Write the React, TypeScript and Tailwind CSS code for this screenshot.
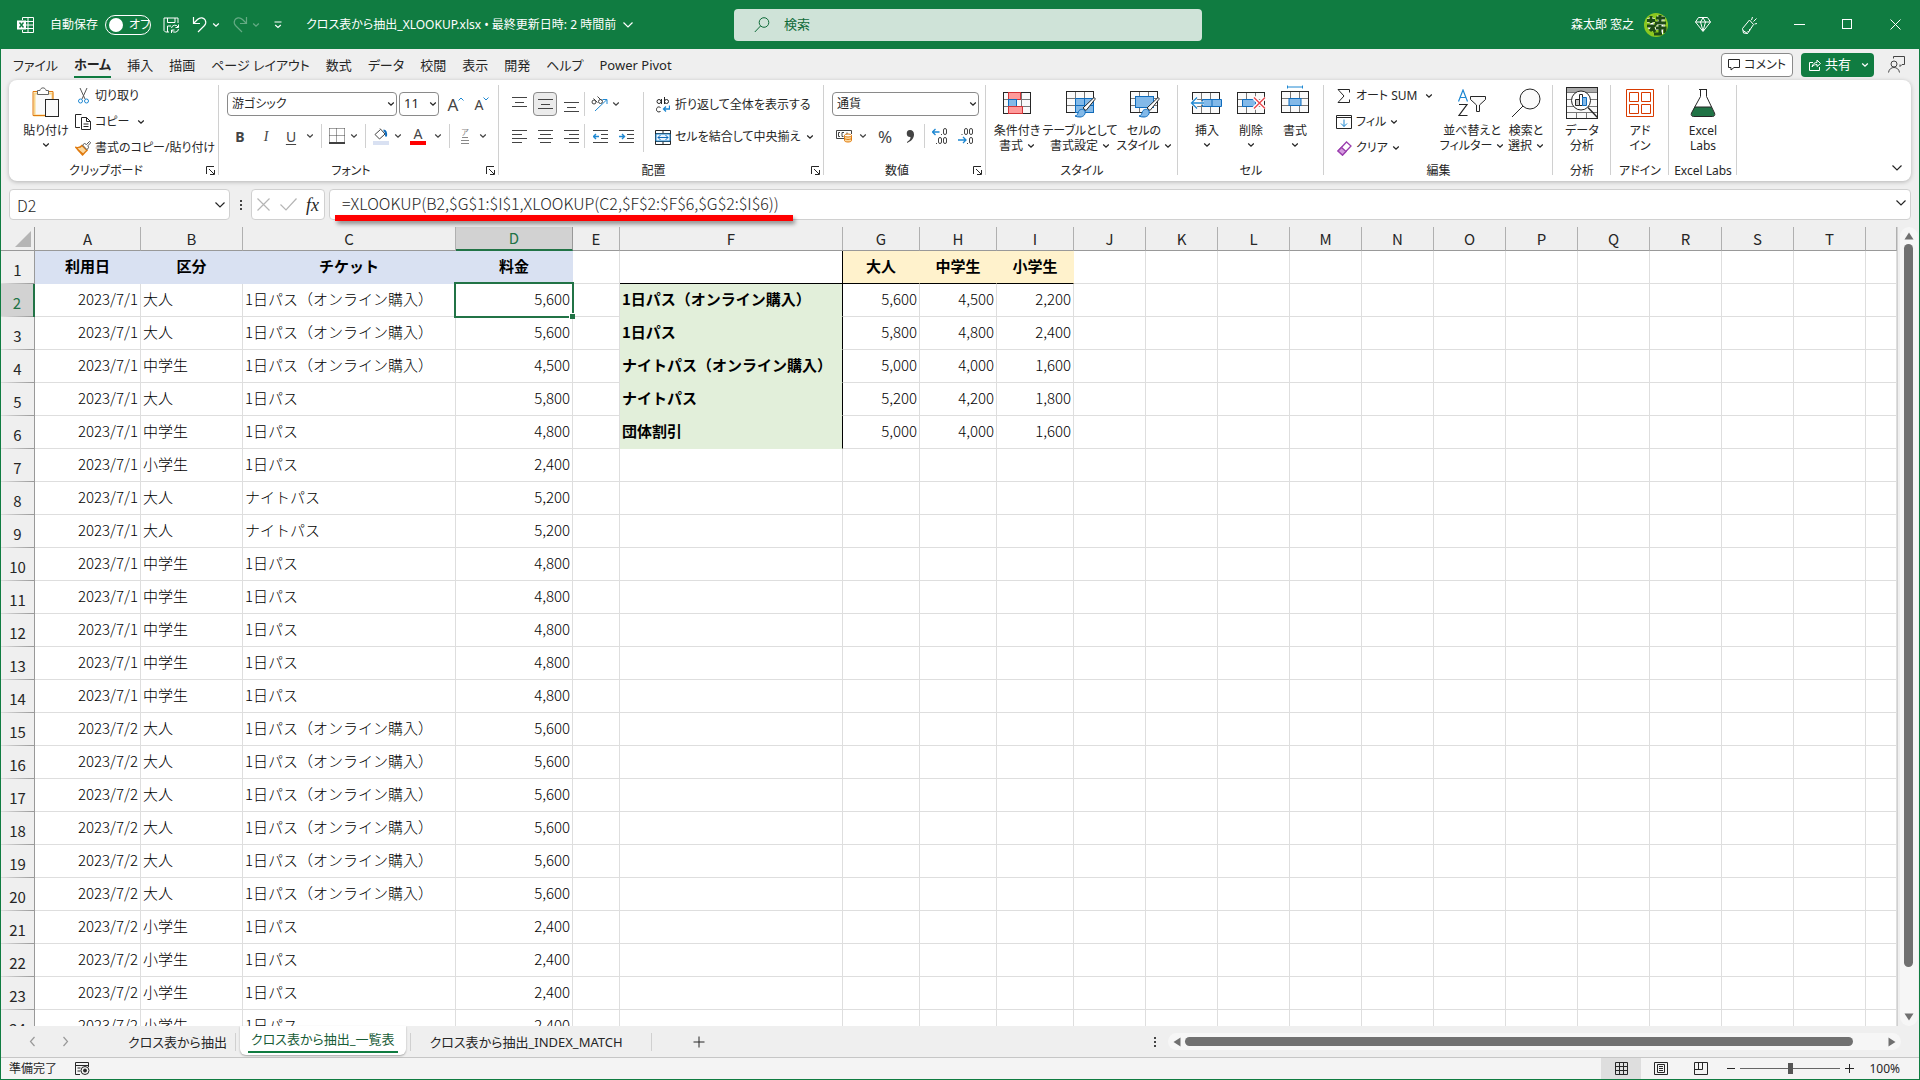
import { useState, type ReactNode } from 'react';

type SheetRow = [date: string, kind: string, ticket: string, price: string];

const ONLINE = '1日パス（オンライン購入）';

const sheetRows: SheetRow[] = [
  ['2023/7/1', '大人', ONLINE, '5,600'],
  ['2023/7/1', '大人', ONLINE, '5,600'],
  ['2023/7/1', '中学生', ONLINE, '4,500'],
  ['2023/7/1', '大人', '1日パス', '5,800'],
  ['2023/7/1', '中学生', '1日パス', '4,800'],
  ['2023/7/1', '小学生', '1日パス', '2,400'],
  ['2023/7/1', '大人', 'ナイトパス', '5,200'],
  ['2023/7/1', '大人', 'ナイトパス', '5,200'],
  ['2023/7/1', '中学生', '1日パス', '4,800'],
  ['2023/7/1', '中学生', '1日パス', '4,800'],
  ['2023/7/1', '中学生', '1日パス', '4,800'],
  ['2023/7/1', '中学生', '1日パス', '4,800'],
  ['2023/7/1', '中学生', '1日パス', '4,800'],
  ['2023/7/2', '大人', ONLINE, '5,600'],
  ['2023/7/2', '大人', ONLINE, '5,600'],
  ['2023/7/2', '大人', ONLINE, '5,600'],
  ['2023/7/2', '大人', ONLINE, '5,600'],
  ['2023/7/2', '大人', ONLINE, '5,600'],
  ['2023/7/2', '大人', ONLINE, '5,600'],
  ['2023/7/2', '小学生', '1日パス', '2,400'],
  ['2023/7/2', '小学生', '1日パス', '2,400'],
  ['2023/7/2', '小学生', '1日パス', '2,400'],
  ['2023/7/2', '小学生', '1日パス', '2,400'],
];

const priceTable = [
  [ONLINE, '5,600', '4,500', '2,200'],
  ['1日パス', '5,800', '4,800', '2,400'],
  ['ナイトパス（オンライン購入）', '5,000', '4,000', '1,600'],
  ['ナイトパス', '5,200', '4,200', '1,800'],
  ['団体割引', '5,000', '4,000', '1,600'],
];

const columns = [
  { name: 'A', width: 'w-[106px]' },
  { name: 'B', width: 'w-[102px]' },
  { name: 'C', width: 'w-[213px]' },
  { name: 'D', width: 'w-[117px]' },
  { name: 'E', width: 'w-[47px]' },
  { name: 'F', width: 'w-[223px]' },
  { name: 'G', width: 'w-[77px]' },
  { name: 'H', width: 'w-[77px]' },
  { name: 'I', width: 'w-[77px]' },
  ...'JKLMNOPQRST'.split('').map((name) => ({ name, width: 'w-[72px]' })),
  { name: '', width: '' },
];

const menuTabs = ['ファイル', 'ホーム', '挿入', '描画', 'ページ レイアウト', '数式', 'データ', '校閲', '表示', '開発', 'ヘルプ', 'Power Pivot'];

/* ---------- small shared pieces ---------- */

interface SvgProps {
  w: number;
  h: number;
  children: ReactNode;
  className?: string;
}

function Svg({ w, h, children, className = '' }: SvgProps) {
  return (
    <svg
      width={w}
      height={h}
      viewBox={`0 0 ${w} ${h}`}
      fill="none"
      stroke="currentColor"
      aria-hidden="true"
      className={`shrink-0 ${className}`}
    >
      {children}
    </svg>
  );
}

function Chevron({ className = '' }: { className?: string }) {
  return (
    <Svg w={8} h={6} className={className}>
      <path d="M1.2 1.5 4 4.2 6.8 1.5" strokeWidth="1.3" />
    </Svg>
  );
}

function BigChevron({ className = '' }: { className?: string }) {
  return (
    <Svg w={12} h={8} className={className}>
      <path d="M1.5 1.5 6 6 10.5 1.5" strokeWidth="1.2" />
    </Svg>
  );
}

function IconButton({ label, width = 'w-[26px]', children }: { label: string; width?: string; children: ReactNode }) {
  return (
    <button type="button" aria-label={label} className={`flex h-6 shrink-0 items-center justify-center ${width}`}>
      {children}
    </button>
  );
}

function MenuArrow({ label }: { label: string }) {
  return (
    <button type="button" aria-label={label} className="flex h-6 w-[14px] shrink-0 items-center justify-center">
      <Chevron />
    </button>
  );
}

function Divider({ className = 'h-6' }: { className?: string }) {
  return <div className={`w-px shrink-0 bg-[#d0d0d0] ${className}`} />;
}

interface GroupProps {
  label: string;
  width: string;
  launcher?: boolean;
  children: ReactNode;
}

function Group({ label, width, launcher, children }: GroupProps) {
  return (
    <section className={`relative flex shrink-0 flex-col ${width}`}>
      <div className="flex h-[81px] pt-[3px]">{children}</div>
      <div className={`flex h-5 items-center justify-center whitespace-nowrap text-[12px] ${launcher ? 'pr-4' : ''}`}>{label}</div>
      {launcher && (
        <button type="button" aria-label={`${label}の設定`} className="absolute right-1 bottom-1.5">
          <Svg w={9} h={9}>
            <path d="M.5 8V.5H8M3 3l5 5M8.5 4v4.5H4" />
          </Svg>
        </button>
      )}
      <div className="absolute top-[5px] right-0 h-[90px] w-px bg-[#d0d0d0]" />
    </section>
  );
}

interface BigButtonProps {
  icon: ReactNode;
  lines: string[];
  width: string;
  menu?: 'inline' | 'below';
}

function BigButton({ icon, lines, width, menu }: BigButtonProps) {
  return (
    <button type="button" className={`flex shrink-0 flex-col items-center text-[12px] leading-[15px] ${width}`}>
      <span className="flex h-10 items-center justify-center">{icon}</span>
      {lines.map((line, i) => (
        <span key={line} className="flex items-center gap-1 whitespace-nowrap">
          {line}
          {menu === 'inline' && i === lines.length - 1 && <Chevron />}
        </span>
      ))}
      {menu === 'below' && <Chevron className="mt-1" />}
    </button>
  );
}

interface RowButtonProps {
  icon: ReactNode;
  label: string;
  menu?: string;
}

function RowButton({ icon, label, menu }: RowButtonProps) {
  return (
    <button type="button" className="flex h-[26px] items-center whitespace-nowrap text-[12px]">
      <span className="mr-1 flex w-4 justify-center">{icon}</span>
      {label}
      {menu && <Chevron className={menu} />}
    </button>
  );
}

/* ---------- title bar ---------- */

function TitleBar() {
  const [autoSave, setAutoSave] = useState(false);

  return (
    <header className="flex h-[49px] shrink-0 items-center bg-[#107c41] text-[12px] text-white">
      <div className="flex min-w-0 flex-1 items-center whitespace-nowrap pl-4">
        <Svg w={17} h={16}>
          <path d="M5.5 3V.5h11v15h-11V13M5.500 4.500h11M5.500 8h11M5.500 11.500h11M11 .5v15" />
          <rect x="0" y="3.500" width="9" height="9" fill="#fff" stroke="none" />
          <path d="m2.500 5.500 4 5m0-5-4 5" stroke="#107c41" strokeWidth="1.400" />
        </Svg>
        <label className="ml-4 flex items-center gap-[7px]">
          自動保存
          <input
            type="checkbox"
            checked={autoSave}
            onChange={(e) => setAutoSave(e.target.checked)}
            className="peer sr-only"
          />
          <span className="flex h-5 w-[46px] items-center gap-1.5 rounded-full border border-white pl-[3px]">
            <span className="h-[14px] w-[14px] shrink-0 rounded-full bg-white" />
            {autoSave ? 'オン' : 'オフ'}
          </span>
        </label>
        <button type="button" aria-label="上書き保存" className="ml-3">
          <Svg w={17} h={16}>
            <path d="M6 15H2.500L1 13.500V1h14v5M4.500 1v4.500H12V1M4.500 15V9H8" />
            <path d="M8.500 11a3.500 3.500 0 0 1 6.500-1m.5-2.500V10.500h-3M15.500 12a3.500 3.500 0 0 1-6.500 1.500M8.500 16v-3h3" />
          </Svg>
        </button>
        <button type="button" aria-label="元に戻す" className="ml-3">
          <Svg w={16} h={17}>
            <path d="M1.500 1v6.500H8M1.500 7.500 5.500 3.500c3-3 6.500-1.500 7.700.5 1 2 .6 4-.7 5.500L6 16" strokeWidth="1.200" />
          </Svg>
        </button>
        <Chevron className="ml-1" />
        <button type="button" aria-label="やり直し" className="ml-3 opacity-35">
          <Svg w={16} h={17}>
            <path d="M14.500 1v6.500H8M14.500 7.500 10.500 3.500c-3-3-6.500-1.500-7.700.5-1 2-.6 4 .7 5.500L10 16" strokeWidth="1.200" />
          </Svg>
        </button>
        <Chevron className="ml-1 opacity-35" />
        <button type="button" aria-label="クイック アクセス ツール バー" className="ml-[14px]">
          <Svg w={8} h={8}>
            <path d="M.5 1h7M1.200 4 4 6.500 6.800 4" strokeWidth="1.200" />
          </Svg>
        </button>
        <button type="button" className="ml-6 flex items-center gap-1.5">
          クロス表から抽出_XLOOKUP.xlsx&nbsp;•&nbsp;最終更新日時: 2 時間前
          <BigChevron />
        </button>
      </div>

      <label className="ml-3 flex h-8 w-[468px] items-center gap-[14px] rounded bg-[#cfe3d8] pl-5 text-[#0f6b39]">
        <Svg w={16} h={16}>
          <circle cx="10" cy="5.500" r="4.800" />
          <path d="M6.500 9 .8 15" />
        </Svg>
        <input
          type="search"
          aria-label="検索"
          placeholder="検索"
          className="min-w-0 flex-1 bg-transparent text-[13px] outline-none placeholder:text-[#0f6b39]"
        />
      </label>

      <div className="flex flex-1 items-center justify-end whitespace-nowrap pr-3">
        森太郎 窓之
        <span className="ml-[10px] flex h-6 w-6 items-center justify-center overflow-hidden rounded-full bg-[#8cc820]">
          <Svg w={24} h={24}>
            <g stroke="#fff" strokeWidth="4">
              <path d="M3 7.500h8M7 4v6M5 16l3-4 3 6M13 4.500l8 1M16 3v8M12 10.500h9M12 15h9M17 12v9" />
            </g>
            <g stroke="#1d4a16" strokeWidth="3">
              <path d="M3 7.500h8M7 3v7M3 13h7l-4 5M8 13l3 6M12 5h9M16 2v9M11 10h11M12 15h9v5M16 12v9M10 21h8" />
            </g>
          </Svg>
        </span>
        <button type="button" aria-label="プレミアム" className="ml-[27px]">
          <Svg w={16} h={15}>
            <path d="M3.500 .5h9l3 4.500L8 14.500.5 5zM.5 5h15M5.500 5 8 14l2.500-9L8 .8z" />
          </Svg>
        </button>
        <button type="button" aria-label="新機能" className="ml-[30px]">
          <Svg w={17} h={18}>
            <path d="M8.500 4 1.500 12.500l1 4.500 4 .5L12.500 8.500zM2 14.500l4.500 3M6.500 15.500c1.500.5 3-1 2-2.500M10.500 4l1-3M12.500 5.500 15.500 2.500M13.500 8l2.500-.5" />
          </Svg>
        </button>
        <button type="button" aria-label="最小化" className="flex w-[47px] justify-end">
          <Svg w={11} h={11}>
            <path d="M0 5.500h11" />
          </Svg>
        </button>
        <button type="button" aria-label="最大化" className="flex w-12 justify-end">
          <Svg w={11} h={11}>
            <rect x=".5" y=".5" width="9" height="9" />
          </Svg>
        </button>
        <button type="button" aria-label="閉じる" className="flex w-[54px] justify-end pr-1.5">
          <Svg w={11} h={11}>
            <path d="m.5.5 10 10m0-10-10 10" />
          </Svg>
        </button>
      </div>
    </header>
  );
}

function MenuBar() {
  return (
    <nav className="flex h-[31px] shrink-0 items-center justify-between">
      <div className="flex items-center pl-1 text-[13px]">
        {menuTabs.map((tab) => (
          <button key={tab} type="button" className="px-2 leading-[26px] whitespace-nowrap">
            <span className={tab === 'ホーム' ? 'block border-b-2 border-[#107c41] font-bold leading-[24px]' : ''}>{tab}</span>
          </button>
        ))}
      </div>
      <div className="flex items-center pr-[14px]">
        <button type="button" className="mr-2 flex h-6 items-center gap-1 rounded border border-[#8a8a8a] bg-white px-1.5 text-[12px]">
          <Svg w={12} h={12}>
            <path d="M.5.5h11v8H6L3 11V8.500H.5z" />
          </Svg>
          コメント
        </button>
        <button type="button" className="mr-[14px] flex h-6 w-[73px] items-center gap-1 rounded bg-[#107c41] pl-2 text-[13px] text-white">
          <Svg w={12} h={13}>
            <path d="M4 4.500H.5v8h10V9M3 9c.5-3 2.500-4.500 5-4.500V2l3.500 3.500L8 8.500V6.500C6 6.500 4.500 7 3 9z" />
          </Svg>
          共有
          <Chevron className="ml-1.5" />
        </button>
        <button type="button" aria-label="フィードバック">
          <Svg w={17} h={17} className="text-[#444]">
            <path d="M5.500.5h11v8h-2.500l-2 2v-2M5.500.5v2" />
            <circle cx="6" cy="8" r="3" />
            <path d="M.5 16.500c.5-3.500 3-5 5.500-5s5 1.500 5.500 5" />
          </Svg>
        </button>
      </div>
    </nav>
  );
}

/* ---------- ribbon ---------- */

function Lines({ d }: { d: string }) {
  return (
    <Svg w={15} h={15}>
      <path d={d} />
    </Svg>
  );
}

function GridBase() {
  return (
    <>
      <rect x="2.500" y="3.500" width="27" height="21" fill="#fafafa" />
      <path d="M2.500 10.500h27M2.500 17.500h27M11.500 3.500v21M20.500 3.500v21" stroke="#777" />
      <rect x="2.500" y="3.500" width="27" height="21" />
    </>
  );
}

function Brush() {
  return (
    <>
      <path d="M19 20 29.500 10c1-.6 2 .3 1.500 1.300L22 22.500z" fill="#fff" />
      <path d="M11 28c2.500-.5 2.500-2 3.500-4.500 1-2.500 5-3 6.500-.5 1 3-1.500 6-5 6-2 0-3.800-.2-5-1z" fill="#83b9e8" stroke="#0f6cbd" />
    </>
  );
}

function Ribbon() {
  return (
    <div className="relative mx-2 flex h-[101px] shrink-0 overflow-hidden rounded-lg bg-white text-[#262626] shadow-[0_1px_4px_rgba(0,0,0,0.25)]">
      <Group label="クリップボード" width="w-[210px]" launcher>
        <div className="flex pl-3">
          <BigButton
            width="w-[50px]"
            lines={['貼り付け']}
            menu="below"
            icon={
              <Svg w={28} h={32}>
                <path d="M2.500 6.500h18v22h-18z" fill="#fafafa" stroke="#f8d58a" strokeWidth="2" />
                <path d="M1 4.500h20v24H1z" stroke="#e07b10" />
                <path d="M5.500 7.500v-4H8c.5-3.500 5.500-3.500 6 0h2.500v4z" fill="#fff" stroke="#666" />
                <rect x="13.500" y="12.500" width="13" height="17" fill="#fafafa" />
              </Svg>
            }
          />
          <div className="ml-1 flex flex-col items-start">
            <RowButton
              label="切り取り"
              icon={
                <Svg w={11} h={16}>
                  <path d="M2 0l5 11M9 0 4 11" stroke="#555" />
                  <circle cx="2.500" cy="13" r="2" stroke="#1e88d2" />
                  <circle cx="8.500" cy="13" r="2" stroke="#1e88d2" />
                </Svg>
              }
            />
            <RowButton
              label="コピー"
              menu="ml-2"
              icon={
                <Svg w={16} h={16}>
                  <path d="M5 13.500H.5V.5h6M6.500 3.500h5l4 4v8h-9zM11.500 3.500v4h4M8.500 10h5M8.500 12.500h5" />
                </Svg>
              }
            />
            <RowButton
              label="書式のコピー/貼り付け"
              icon={
                <Svg w={16} h={15}>
                  <path d="M1 6.500c3 .5 5-.5 6-2l5 5c-2 1.500-3 3-4.500 4.500z" fill="#fbd9a0" stroke="#e07b10" strokeWidth="1.400" />
                  <path d="m3 9 5 4" stroke="#e07b10" strokeWidth="1.500" />
                  <path d="m7.500 4 2-1.500 2 1 3-3 1.200 1.200-2.700 3 .5 2-1.500 2z" fill="#fff" stroke="#555" />
                </Svg>
              }
            />
          </div>
        </div>
      </Group>

      <Group label="フォント" width="w-[280px]" launcher>
        <div className="flex flex-col gap-2 pt-[9px] pl-2">
          <div className="flex items-center">
            <div className="relative mr-0.5 w-[170px]">
              <select aria-label="フォント名" className="block h-6 w-full appearance-none rounded border border-[#8a8a8a] bg-white pl-1 text-[12px]">
                <option>游ゴシック</option>
              </select>
              <Chevron className="pointer-events-none absolute top-[9px] right-0.5" />
            </div>
            <div className="relative mr-1 w-10">
              <select aria-label="フォント サイズ" className="block h-6 w-full appearance-none rounded border border-[#8a8a8a] bg-white pl-1 text-[13px]">
                <option>11</option>
              </select>
              <Chevron className="pointer-events-none absolute top-[9px] right-0.5" />
            </div>
            <IconButton label="フォント サイズの拡大">
              <span className="text-[17px] leading-none text-[#444]">A</span>
              <Svg w={6} h={4} className="mb-[10px] text-[#1e88d2]">
                <path d="M.5 3.500 3 1l2.500 2.500" />
              </Svg>
            </IconButton>
            <IconButton label="フォント サイズの縮小">
              <span className="mt-0.5 text-[14px] leading-none text-[#444]">A</span>
              <Svg w={6} h={4} className="mb-[10px] text-[#1e88d2]">
                <path d="M.5.500 3 3 5.500.5" />
              </Svg>
            </IconButton>
          </div>
          <div className="flex items-center text-[14px] text-[#444]">
            <IconButton label="太字">
              <b>B</b>
            </IconButton>
            <IconButton label="斜体">
              <i className="font-['Liberation_Serif',serif]">I</i>
            </IconButton>
            <IconButton label="下線" width="w-6">
              <u className="underline-offset-2">U</u>
            </IconButton>
            <MenuArrow label="下線の種類" />
            <Divider className="mx-1 h-6" />
            <IconButton label="罫線" width="w-[21px]">
              <Svg w={16} h={16}>
                <path d="M.5.500h15M.5 7.500h15M.5.500v14M15.500.500v14M7.500.500v14" strokeDasharray="1 1" />
                <path d="M0 15h16" stroke="#000" strokeWidth="1.500" />
              </Svg>
            </IconButton>
            <MenuArrow label="罫線の種類" />
            <Divider className="mx-1 h-6" />
            <IconButton label="塗りつぶしの色" width="w-[21px]">
              <Svg w={16} h={18}>
                <path d="M7 1.500 12 7l-5.500 5L2 7.500 7.500 2.500" />
                <path d="M10.500 3.500c2 0 3 2 2.500 6" stroke="#0f6cbd" strokeWidth="2" />
                <rect x="0" y="14" width="16" height="4" fill="#d9e1f2" stroke="none" />
              </Svg>
            </IconButton>
            <MenuArrow label="塗りつぶしの色の一覧" />
            <IconButton label="フォントの色">
              <span className="flex flex-col items-center">
                <span className="leading-[14px]">A</span>
                <span className="h-1 w-4 bg-[#f00]" />
              </span>
            </IconButton>
            <MenuArrow label="フォントの色の一覧" />
            <Divider className="mx-1 h-6" />
            <IconButton label="ふりがな" width="w-[22px]">
              <span className="flex flex-col items-center text-[#888]">
                <span className="text-[8px] leading-[8px]">ア</span>
                <Svg w={8} h={8}>
                  <path d="M1 1.500h6M0 4.500h8M0 7.500h8" />
                </Svg>
              </span>
            </IconButton>
            <MenuArrow label="ふりがなの設定" />
          </div>
        </div>
      </Group>

      <Group label="配置" width="w-[325px]" launcher>
        <div className="flex pt-[9px] pl-[7px]">
          <div className="flex flex-col gap-2 text-[#444]">
            <div className="flex items-center">
              <IconButton label="上揃え">
                <Lines d="M0 .5h15M3 5.500h9M0 9.500h15" />
              </IconButton>
              <button
                type="button"
                aria-label="上下中央揃え"
                className="mx-px flex h-6 w-6 items-center justify-center rounded border border-[#8a8a8a] bg-[#ebebeb]"
              >
                <Lines d="M0 2.500h15M3 7.500h9M0 11.500h15" />
              </button>
              <IconButton label="下揃え">
                <Lines d="M0 5.500h15M3 10.500h9M0 14.500h15" />
              </IconButton>
              <Divider className="mr-1 h-6" />
              <IconButton label="方向" width="w-5">
                <Svg w={17} h={16}>
                  <circle cx="3" cy="6" r="2" />
                  <path d="m2.500 2.500 4 4M6.500.500l4 4" />
                  <circle cx="9.500" cy="5.500" r="2" />
                  <path d="M4 15 16 3.500M11.500 3.500H16V8" stroke="#1e88d2" />
                </Svg>
              </IconButton>
              <MenuArrow label="方向の種類" />
            </div>
            <div className="flex items-center">
              <IconButton label="左揃え">
                <Lines d="M0 1.500h15M0 5.500h10M0 9.500h15M0 13.500h10" />
              </IconButton>
              <IconButton label="中央揃え">
                <Lines d="M0 1.500h15M2 5.500h11M0 9.500h15M2 13.500h11" />
              </IconButton>
              <IconButton label="右揃え">
                <Lines d="M0 1.500h15M5 5.500h10M0 9.500h15M5 13.500h10" />
              </IconButton>
              <Divider className="mr-0.5 h-6" />
              <IconButton label="インデントを減らす">
                <Svg w={15} h={15}>
                  <path d="M0 1.500h15M8 5.500h7M8 9.500h7M0 13.500h15" />
                  <path d="M.5 7.500H6M3 5 .5 7.500 3 10" stroke="#1e88d2" strokeWidth="1.400" />
                </Svg>
              </IconButton>
              <IconButton label="インデントを増やす">
                <Svg w={15} h={15}>
                  <path d="M0 1.500h15M8 5.500h7M8 9.500h7M0 13.500h15" />
                  <path d="M0 7.500h5.500M3 5l2.500 2.500L3 10" stroke="#1e88d2" strokeWidth="1.400" />
                </Svg>
              </IconButton>
            </div>
          </div>
          <Divider className="mr-[11px] ml-1 h-[60px]" />
          <div className="flex flex-col items-start gap-[6px]">
            <RowButton
              label="折り返して全体を表示する"
              icon={
                <Svg w={14} h={16}>
                  <circle cx="3" cy="4.500" r="2" />
                  <path d="M5.500 2v5M8.500 0v7M4.500 10.500c-2.500-1.500-4 .2-4 2s1.500 3.200 4 2" />
                  <circle cx="10.500" cy="4.500" r="2" />
                  <path d="M13.500 8.500v3.500H7.500M10 9.500 7.500 12l2.500 2.500" stroke="#1e88d2" strokeWidth="1.300" />
                </Svg>
              }
            />
            <RowButton
              label="セルを結合して中央揃え"
              menu="ml-1.5"
              icon={
                <Svg w={16} h={15}>
                  <path d="M.5.500h15v14H.5zM.5 3.500h15M.5 11.500h15M8 .5v3M8 11.500v3" />
                  <path d="M1 4h14v7H1z" fill="#eaf4fc" stroke="#1e88d2" />
                  <path d="M3 7.500h10M5.500 5 3 7.500 5.500 10M10.500 5 13 7.500 10.500 10" stroke="#0f6cbd" />
                </Svg>
              }
            />
          </div>
        </div>
      </Group>

      <Group label="数値" width="w-[162px]" launcher>
        <div className="flex flex-1 flex-col gap-2 pt-[9px] pr-2 pl-2">
          <div className="relative">
            <select aria-label="表示形式" className="block h-6 w-full appearance-none rounded border border-[#8a8a8a] bg-white pl-1 text-[12px]">
              <option>通貨</option>
            </select>
            <Chevron className="pointer-events-none absolute top-[9px] right-0.5" />
          </div>
          <div className="flex items-center text-[#444]">
            <IconButton label="通貨表示形式" width="w-6">
              <Svg w={17} h={14}>
                <path d="M8 9.500H.5v-8h15V5M4 3.500H2.500v4H4M8 3.500H6v4h1.500M11 3.500v2" />
                <path d="M8.500 6.500v5c0 2 7 2 7 0v-5" fill="#fbd9a0" stroke="#e07b10" />
                <ellipse cx="12" cy="6.500" rx="3.500" ry="1.500" fill="#fff" stroke="#e07b10" />
                <path d="M8.500 9c0 2 7 2 7 0" stroke="#e07b10" />
              </Svg>
            </IconButton>
            <MenuArrow label="通貨の種類" />
            <IconButton label="パーセント スタイル" width="w-[30px]">
              <span className="text-[17px] leading-none">%</span>
            </IconButton>
            <IconButton label="桁区切りスタイル" width="w-5">
              <Svg w={8} h={13}>
                <path d="M4 0a3.500 3.500 0 1 0 .5 7C4.500 9 3.500 10.500 1 12v1c4-1.500 7-4.500 7-8.500C8 1.500 6.500 0 4 0z" fill="currentColor" stroke="none" />
              </Svg>
            </IconButton>
            <Divider className="mr-0.5 ml-1 h-6" />
            <IconButton label="小数点以下の表示桁数を増やす">
              <Svg w={16} h={16}>
                <path d="M.5 4h7M3.500 1 .5 4l3 3" stroke="#1e88d2" strokeWidth="1.300" />
                <rect x="11.500" y=".5" width="3" height="6" rx="1.500" />
                <rect x="6.500" y="9.500" width="3" height="6" rx="1.500" />
                <rect x="11.500" y="9.500" width="3" height="6" rx="1.500" />
                <path d="M9 6.500h1M4 15.500h1" />
              </Svg>
            </IconButton>
            <IconButton label="小数点以下の表示桁数を減らす">
              <Svg w={16} h={16}>
                <path d="M0 12h8M5 9l3 3-3 3" stroke="#1e88d2" strokeWidth="1.300" />
                <rect x="6.500" y=".5" width="3" height="6" rx="1.500" />
                <rect x="11.500" y=".5" width="3" height="6" rx="1.500" />
                <rect x="11.500" y="9.500" width="3" height="6" rx="1.500" />
                <path d="M3.500 6.500h1M9 15.500h1" />
              </Svg>
            </IconButton>
          </div>
        </div>
      </Group>

      <Group label="スタイル" width="w-[192px]">
        <div className="flex pl-0.5">
          <BigButton
            width="w-[58px]"
            lines={['条件付き', '書式']}
            menu="inline"
            icon={
              <Svg w={32} h={28}>
                <GridBase />
                <rect x="7.500" y="3.500" width="12" height="7" fill="#ff9a9a" stroke="#d13438" />
                <rect x="7.500" y="10.500" width="8" height="7" fill="#83b9e8" stroke="#0f6cbd" />
                <rect x="7.500" y="17.500" width="14" height="7" fill="#ff9a9a" stroke="#d13438" />
              </Svg>
            }
          />
          <BigButton
            width="w-[68px]"
            lines={['テーブルとして', '書式設定']}
            menu="inline"
            icon={
              <Svg w={32} h={30}>
                <GridBase />
                <path d="M11.500 10.500h18v14h-18z" fill="#83b9e8" stroke="#0f6cbd" />
                <path d="M20.500 10.500v14M11.500 17.500h18" stroke="#0f6cbd" />
                <Brush />
              </Svg>
            }
          />
          <BigButton
            width="w-[60px]"
            lines={['セルの', 'スタイル']}
            menu="inline"
            icon={
              <Svg w={32} h={30}>
                <GridBase />
                <rect x="7.500" y="8.500" width="18" height="11" fill="#83b9e8" stroke="#0f6cbd" />
                <Brush />
              </Svg>
            }
          />
        </div>
      </Group>

      <Group label="セル" width="w-[146px]">
        <div className="flex pl-[7px]">
          <BigButton
            width="w-11"
            lines={['挿入']}
            menu="below"
            icon={
              <Svg w={34} h={28}>
                <GridBase />
                <path d="M12.500 10.500h19v7h-19zM22 10.500v7" fill="#83b9e8" stroke="#0f6cbd" />
                <path d="M14 14H1.500M7 8.500 1.500 14 7 19.500" stroke="#fff" strokeWidth="3" />
                <path d="M14 14H1.500M7 8.500 1.500 14 7 19.500" stroke="#1e88d2" strokeWidth="1.300" />
              </Svg>
            }
          />
          <BigButton
            width="w-11"
            lines={['削除']}
            menu="below"
            icon={
              <Svg w={32} h={28}>
                <GridBase />
                <path d="M7.500 10.500h13v7h-13z" fill="#83b9e8" stroke="#0f6cbd" />
                <path d="m19 8.500 11 11m0-11-11 11" stroke="#fff" strokeWidth="4" />
                <path d="m19 8.500 11 11m0-11-11 11" stroke="#e8484d" strokeWidth="1.400" />
              </Svg>
            }
          />
          <BigButton
            width="w-11"
            lines={['書式']}
            menu="below"
            icon={
              <Svg w={32} h={32} className="mb-1">
                <path d="M8.500.500v3M23.500.500v3M8.500 2h15" stroke="#1e88d2" />
                <g transform="translate(0 3)">
                  <GridBase />
                  <rect x="10" y="10.500" width="12" height="7" fill="#83b9e8" stroke="#0f6cbd" />
                </g>
              </Svg>
            }
          />
        </div>
      </Group>

      <Group label="編集" width="w-[229px]">
        <div className="flex flex-1 pl-3">
          <div className="flex w-[108px] flex-col items-start">
            <RowButton
              label="オート SUM"
              menu="ml-2"
              icon={
                <Svg w={14} h={15}>
                  <path d="M12.500 3.500V.5H1l6 6.500L1 13.500h11.500v-3" />
                </Svg>
              }
            />
            <RowButton
              label="フィル"
              menu="ml-1"
              icon={
                <Svg w={16} h={14}>
                  <path d="M.5.500h15v13H.5zM.5 2.500h15" />
                  <path d="M8 4.500v7M5 8.500l3 3 3-3" stroke="#1e88d2" />
                </Svg>
              }
            />
            <RowButton
              label="クリア"
              menu="ml-1"
              icon={
                <Svg w={15} h={15} className="text-[#9b3fae]">
                  <path d="M1 10 9.500 1 14 5l-8.500 9z" fill="#fff" strokeWidth="1.300" />
                  <path d="M1 10 4.500 6.500 9 10.500 5.500 14z" fill="#d59be0" strokeWidth="1.300" />
                </Svg>
              }
            />
          </div>
          <BigButton
            width="w-[56px]"
            lines={['並べ替えと', 'フィルター']}
            menu="inline"
            icon={
              <Svg w={30} h={28}>
                <path d="M1.500 12.500 6 1l4.500 11.500M3 8.500h6" stroke="#1e88d2" strokeWidth="1.200" />
                <path d="M2 15.500h8L2 26.500h8.500" strokeWidth="1.200" />
                <path d="M13.500 7.500h15v3L22.500 16v6.500h-3V16l-6-5.500z" fill="#fafafa" />
              </Svg>
            }
          />
          <BigButton
            width="w-[52px]"
            lines={['検索と', '選択']}
            menu="inline"
            icon={
              <Svg w={30} h={30}>
                <circle cx="19" cy="11" r="10" fill="#fafafa" />
                <path d="M12 18 1 29" />
              </Svg>
            }
          />
        </div>
      </Group>

      <Group label="分析" width="w-[58px]">
        <BigButton
          width="w-full"
          lines={['データ', '分析']}
          icon={
            <Svg w={32} h={32}>
              <rect x=".5" y=".5" width="31" height="31" fill="#fafafa" />
              <path d="M1 1h30v4H1z" fill="#aaa" stroke="none" />
              <path d="M.5 5.500h31M.5 12.500h31M.5 19.500h31M.5 25.500h31M10.500 25v6M20.500 25v6" stroke="#777" />
              <rect x=".5" y=".5" width="31" height="31" />
              <circle cx="15" cy="13.500" r="9.500" fill="#fff" />
              <path d="m22 20.500 9.500 10" strokeWidth="1.400" />
              <path d="M9.500 12.500h4v6h-4z" fill="#ccc" />
              <path d="M13.500 7.500h3v11h-3z" fill="#fff" />
              <path d="M16.500 10.500h4v8h-4z" fill="#83b9e8" stroke="#0f6cbd" />
            </Svg>
          }
        />
      </Group>

      <Group label="アドイン" width="w-[58px]">
        <BigButton
          width="w-full"
          lines={['アド', 'イン']}
          icon={
            <Svg w={28} h={28} className="text-[#d83b01]">
              <path d="M.5.500h27v27H.5zM3.500 3.500h9v9h-9zM15.500 3.500h9v9h-9zM3.500 15.500h9v9h-9zM15.500 15.500h9v9h-9z" />
            </Svg>
          }
        />
      </Group>

      <Group label="Excel Labs" width="w-[68px]">
        <BigButton
          width="w-full"
          lines={['Excel', 'Labs']}
          icon={
            <Svg w={26} h={28}>
              <path d="M4.500 18h17l3 6.500c.5 1.500-.3 3-2 3h-19c-1.700 0-2.500-1.500-2-3z" fill="#217346" stroke="none" />
              <path d="M9 .5h8M10.500.500v7L1.500 24c-.8 2 0 3.500 2 3.500h19c2 0 2.800-1.500 2-3.500L16.500 7.500v-7M4.500 18h17" />
            </Svg>
          }
        />
      </Group>

      <button type="button" aria-label="リボンを折りたたむ" className="ml-auto self-end pr-2 pb-[9px]">
        <BigChevron />
      </button>
    </div>
  );
}

/* ---------- formula bar ---------- */

function FormulaBar() {
  const [formula, setFormula] = useState('=XLOOKUP(B2,$G$1:$I$1,XLOOKUP(C2,$F$2:$F$6,$G$2:$I$6))');

  return (
    <div className="mx-2 mt-2 flex h-[31px] shrink-0 items-center text-[16px] text-[#262626]">
      <div className="relative h-full w-[221px] shrink-0">
        <input
          aria-label="名前ボックス"
          defaultValue="D2"
          className="h-full w-full rounded border border-[#d0d0d0] bg-white pl-[7px] outline-none"
        />
        <BigChevron className="absolute top-3 right-1" />
      </div>
      <span className="flex w-[21px] flex-col items-center gap-0.5">
        <span className="h-0.5 w-0.5 bg-[#444]" />
        <span className="h-0.5 w-0.5 bg-[#444]" />
        <span className="h-0.5 w-0.5 bg-[#444]" />
      </span>
      <div className="mr-1 flex h-full w-[74px] shrink-0 items-center justify-between rounded border border-[#d0d0d0] bg-white px-[5px]">
        <button type="button" aria-label="キャンセル">
          <Svg w={13} h={13} className="text-[#b5b5b5]">
            <path d="m.5.500 12 12m0-12-12 12" strokeWidth="1.200" />
          </Svg>
        </button>
        <button type="button" aria-label="入力">
          <Svg w={17} h={13} className="text-[#b5b5b5]">
            <path d="m.5 6.500 5.500 5.500L16.500.500" strokeWidth="1.200" />
          </Svg>
        </button>
        <button type="button" aria-label="関数の挿入" className="font-['Liberation_Serif',serif] text-[18px] leading-none italic">
          fx
        </button>
      </div>
      <div className="relative h-full min-w-0 flex-1">
        <input
          aria-label="数式バー"
          value={formula}
          onChange={(e) => setFormula(e.target.value)}
          className="h-full w-full rounded border border-[#d0d0d0] bg-white pr-7 pb-1 pl-3 outline-none"
        />
        <div className="pointer-events-none absolute top-[26px] left-1.5 h-1.5 w-[458px] bg-[#f00] shadow-[2px_3px_4px_rgba(0,0,0,0.4)]" />
        <BigChevron className="absolute top-2.5 right-1" />
      </div>
    </div>
  );
}

/* ---------- sheet ---------- */

interface Cell {
  text: string;
  style: string;
}

const PLAIN = 'border-[#dedede]';
const BLUE = 'border-[#d9e1f2] bg-[#d9e1f2] text-center font-bold';
const YELLOW = 'border-r-[#fff2cc] border-b-black bg-[#fff2cc] text-center font-bold';
const GREEN = 'border-r-black border-b-[#e2efda] bg-[#e2efda] font-bold';

// row and col are zero based, col 0 is A
function getCell(row: number, col: number): Cell {
  if (row === 0) {
    if (col < 4) return { text: ['利用日', '区分', 'チケット', '料金'][col], style: BLUE };
    if (col === 5) return { text: '', style: 'border-black' };
    if (col > 5 && col < 9) return { text: ['大人', '中学生', '小学生'][col - 6], style: YELLOW };
    return { text: '', style: PLAIN };
  }
  if (col < 4) {
    const align = col === 0 || col === 3 ? 'text-right' : 'text-left';
    return { text: sheetRows[row - 1][col], style: `${PLAIN} ${align}` };
  }
  if (row <= priceTable.length && col > 4 && col < 9) {
    const text = priceTable[row - 1][col - 5];
    return { text, style: col === 5 ? GREEN : `${PLAIN} text-right` };
  }
  return { text: '', style: PLAIN };
}

function Sheet() {
  const [active] = useState({ row: 1, col: 3 });

  return (
    <div className="min-w-0 flex-1 overflow-hidden border-r border-[#d0d0d0]">
      <table className="w-full table-fixed border-separate border-spacing-0 bg-white text-[15px] leading-5 text-black">
        <colgroup>
          <col className="w-[34px]" />
          {columns.map((c, i) => (
            <col key={i} className={c.width} />
          ))}
        </colgroup>
        <thead>
          <tr className="h-6 bg-[#efefef]">
            <th className="border-r border-b border-[#999] p-0" aria-label="すべて選択">
              <Svg w={18} h={18} className="ml-auto mr-0.5">
                <path d="M17 1v16H1z" fill="#b5b5b5" stroke="none" />
              </Svg>
            </th>
            {columns.map((c, i) => (
              <th
                key={i}
                scope="col"
                className={`border-r p-0 leading-[22px] font-normal ${
                  i === active.col
                    ? 'border-b-2 border-r-[#999] border-b-[#217346] bg-[#d2d2d2] text-[#217346]'
                    : 'border-b border-r-[#b0b0b0] border-b-[#999] text-[#262626]'
                }`}
              >
                {c.name}
              </th>
            ))}
          </tr>
        </thead>
        <tbody>
          {Array.from({ length: sheetRows.length + 1 }, (_, row) => (
            <tr key={row} className="h-[33px]">
              <th
                scope="row"
                className={`bg-[linear-gradient(to_right,#dddddd,#999999)] bg-[length:100%_1px] bg-bottom bg-no-repeat p-0 pt-1 font-normal ${
                  row === active.row
                    ? 'border-r-2 border-[#217346] bg-[#d2d2d2] text-[#217346]'
                    : 'border-r border-[#999] bg-[#efefef] text-[#262626]'
                }`}
              >
                {row + 1}
              </th>
              {columns.map((_, col) => {
                const cell = getCell(row, col);
                const isActive = row === active.row && col === active.col;
                return (
                  <td key={col} className={`border-r border-b px-0.5 pt-0 pb-0.5 whitespace-nowrap ${cell.style} ${isActive ? 'relative' : ''}`}>
                    {cell.text}
                    {isActive && (
                      <>
                        <span className="absolute -top-0.5 -right-0.5 -bottom-0.5 -left-0.5 border-2 border-[#217346]" />
                        <span className="absolute -right-[3px] -bottom-[3px] h-1.5 w-1.5 border-t border-l border-white bg-[#217346]" />
                      </>
                    )}
                  </td>
                );
              })}
            </tr>
          ))}
        </tbody>
      </table>
    </div>
  );
}

function VerticalScroll() {
  return (
    <div className="flex w-[21px] shrink-0 justify-center">
      <div className="flex w-[18px] flex-col items-center rounded-full bg-[#f6f6f6] py-[5px] text-[#707070]">
        <Svg w={10} h={8}>
          <path d="M5 .5 9.500 7.500H.5z" fill="currentColor" stroke="none" />
        </Svg>
        <div className="mt-1 flex min-h-0 w-[9px] flex-1 flex-col">
          <div className="h-[94%] rounded-full bg-[#707070]" />
        </div>
        <Svg w={10} h={8}>
          <path d="M5 7.500 9.500.500H.5z" fill="currentColor" stroke="none" />
        </Svg>
      </div>
    </div>
  );
}

function SheetTabs() {
  return (
    <div className="flex h-8 shrink-0 items-start border-b border-[#c6c6c6] text-[13px] text-[#262626]">
      <div className="flex h-[31px] items-center gap-[26px] pl-7 text-[#999]">
        <button type="button" aria-label="前のシート">
          <Svg w={7} h={11}>
            <path d="M5.500 1 1.500 5.500l4 4.500" strokeWidth="1.200" />
          </Svg>
        </button>
        <button type="button" aria-label="次のシート">
          <Svg w={7} h={11}>
            <path d="m1.500 1 4 4.500L1.500 10" strokeWidth="1.200" />
          </Svg>
        </button>
      </div>
      <button type="button" className="mt-[7px] ml-[43px] h-[18px] border-r border-[#d0d0d0] pr-2 pl-4 leading-[18px] whitespace-nowrap">
        クロス表から抽出
      </button>
      <button type="button" className="ml-1 h-[29px] rounded-b-md bg-white px-2 whitespace-nowrap shadow-[0_1px_2px_rgba(0,0,0,0.3)]">
        <span className="block border-b-2 border-[#107c41] px-[3px] leading-[23px] text-[#185c37]">クロス表から抽出_一覧表</span>
      </button>
      <button type="button" className="mt-[7px] ml-1 h-[18px] border-x border-[#d0d0d0] pr-7 pl-[19px] leading-[18px] whitespace-nowrap">
        クロス表から抽出_INDEX_MATCH
      </button>
      <button type="button" aria-label="新しいシート" className="flex h-[31px] w-[95px] items-center justify-center">
        <Svg w={12} h={12}>
          <path d="M6 .5v11M.5 6h11" />
        </Svg>
      </button>
      <div className="ml-auto flex h-[31px] w-[40%] items-center gap-3">
        <span className="flex flex-col gap-0.5 pl-0.5">
          <span className="h-0.5 w-0.5 bg-[#444]" />
          <span className="h-0.5 w-0.5 bg-[#444]" />
          <span className="h-0.5 w-0.5 bg-[#444]" />
        </span>
        <div className="mr-[18px] flex h-[17px] min-w-0 flex-1 items-center rounded-full bg-[#f6f6f6] px-[5px] text-[#707070]">
          <Svg w={8} h={10}>
            <path d="M.5 5 7.500.500v9z" fill="currentColor" stroke="none" />
          </Svg>
          <div className="ml-1 flex min-w-0 flex-1">
            <div className="h-[9px] w-[95%] rounded-full bg-[#707070]" />
          </div>
          <Svg w={8} h={10}>
            <path d="M7.500 5 .5.500v9z" fill="currentColor" stroke="none" />
          </Svg>
        </div>
      </div>
    </div>
  );
}

function StatusBar() {
  const [zoom, setZoom] = useState(100);

  return (
    <footer className="flex h-[21px] shrink-0 items-center bg-[#f4f4f4] text-[12px] text-[#262626]">
      <span className="pl-2">準備完了</span>
      <button type="button" aria-label="マクロの記録" className="ml-[18px]">
        <Svg w={15} h={13}>
          <path d="M5 12.500H.5V.5h13V5M.5 3.500h13M2.500 6h3M2.500 9h3" />
          <circle cx="10" cy="8.500" r="4" />
          <circle cx="10" cy="8.500" r="1.500" fill="currentColor" />
        </Svg>
      </button>
      <div className="ml-auto flex h-full items-center pr-[19px]">
        <button type="button" aria-label="標準" className="flex h-full w-10 items-center justify-center bg-[#dedede]">
          <Svg w={13} h={13}>
            <path d="M.5.500h12v12H.5zM.5 4.500h12M.5 8.500h12M4.500.500v12M8.500.500v12" />
          </Svg>
        </button>
        <button type="button" aria-label="ページ レイアウト" className="flex h-full w-10 items-center justify-center">
          <Svg w={14} h={13}>
            <path d="M.5.500h13v12H.5zM3.500 2.500h7v8h-7zM5 4.500h4M5 6.500h4M5 8.500h4" />
          </Svg>
        </button>
        <button type="button" aria-label="改ページ プレビュー" className="flex h-full w-10 items-center justify-center">
          <Svg w={14} h={13}>
            <path d="M.5.500h13v12H.5zM.5 7.500h8V.5M4.500.500v7" />
          </Svg>
        </button>
        <button type="button" aria-label="縮小" className="ml-1.5">
          <Svg w={8} h={9}>
            <path d="M0 4.500h8" />
          </Svg>
        </button>
        <input
          type="range"
          aria-label="ズーム"
          min={0}
          max={200}
          value={zoom}
          onChange={(e) => setZoom(Number(e.target.value))}
          className="mx-[5px] h-3 w-[100px] appearance-none bg-[linear-gradient(#666666,#666666)] bg-[length:100%_1px] bg-center bg-no-repeat [&::-webkit-slider-thumb]:h-[11px] [&::-webkit-slider-thumb]:w-[5px] [&::-webkit-slider-thumb]:appearance-none [&::-webkit-slider-thumb]:bg-[#555]"
        />
        <button type="button" aria-label="拡大">
          <Svg w={9} h={9}>
            <path d="M0 4.500h9M4.500 0v9" />
          </Svg>
        </button>
        <span className="ml-[15px]">{zoom}%</span>
      </div>
    </footer>
  );
}

export default function App() {
  return (
    <div className="flex h-screen flex-col overflow-hidden border-x border-b border-[#107c41] bg-[#efefef] font-['Noto_Sans','Noto_Sans_CJK_JP',sans-serif] text-[#262626] [font-feature-settings:'palt']">
      <TitleBar />
      <MenuBar />
      <Ribbon />
      <div className="contents font-['Noto_Sans_CJK_JP',sans-serif] font-light [font-feature-settings:normal]">
        <FormulaBar />
        <div className="mt-[7px] flex min-h-0 flex-1">
          <Sheet />
          <VerticalScroll />
        </div>
      </div>
      <SheetTabs />
      <StatusBar />
    </div>
  );
}
